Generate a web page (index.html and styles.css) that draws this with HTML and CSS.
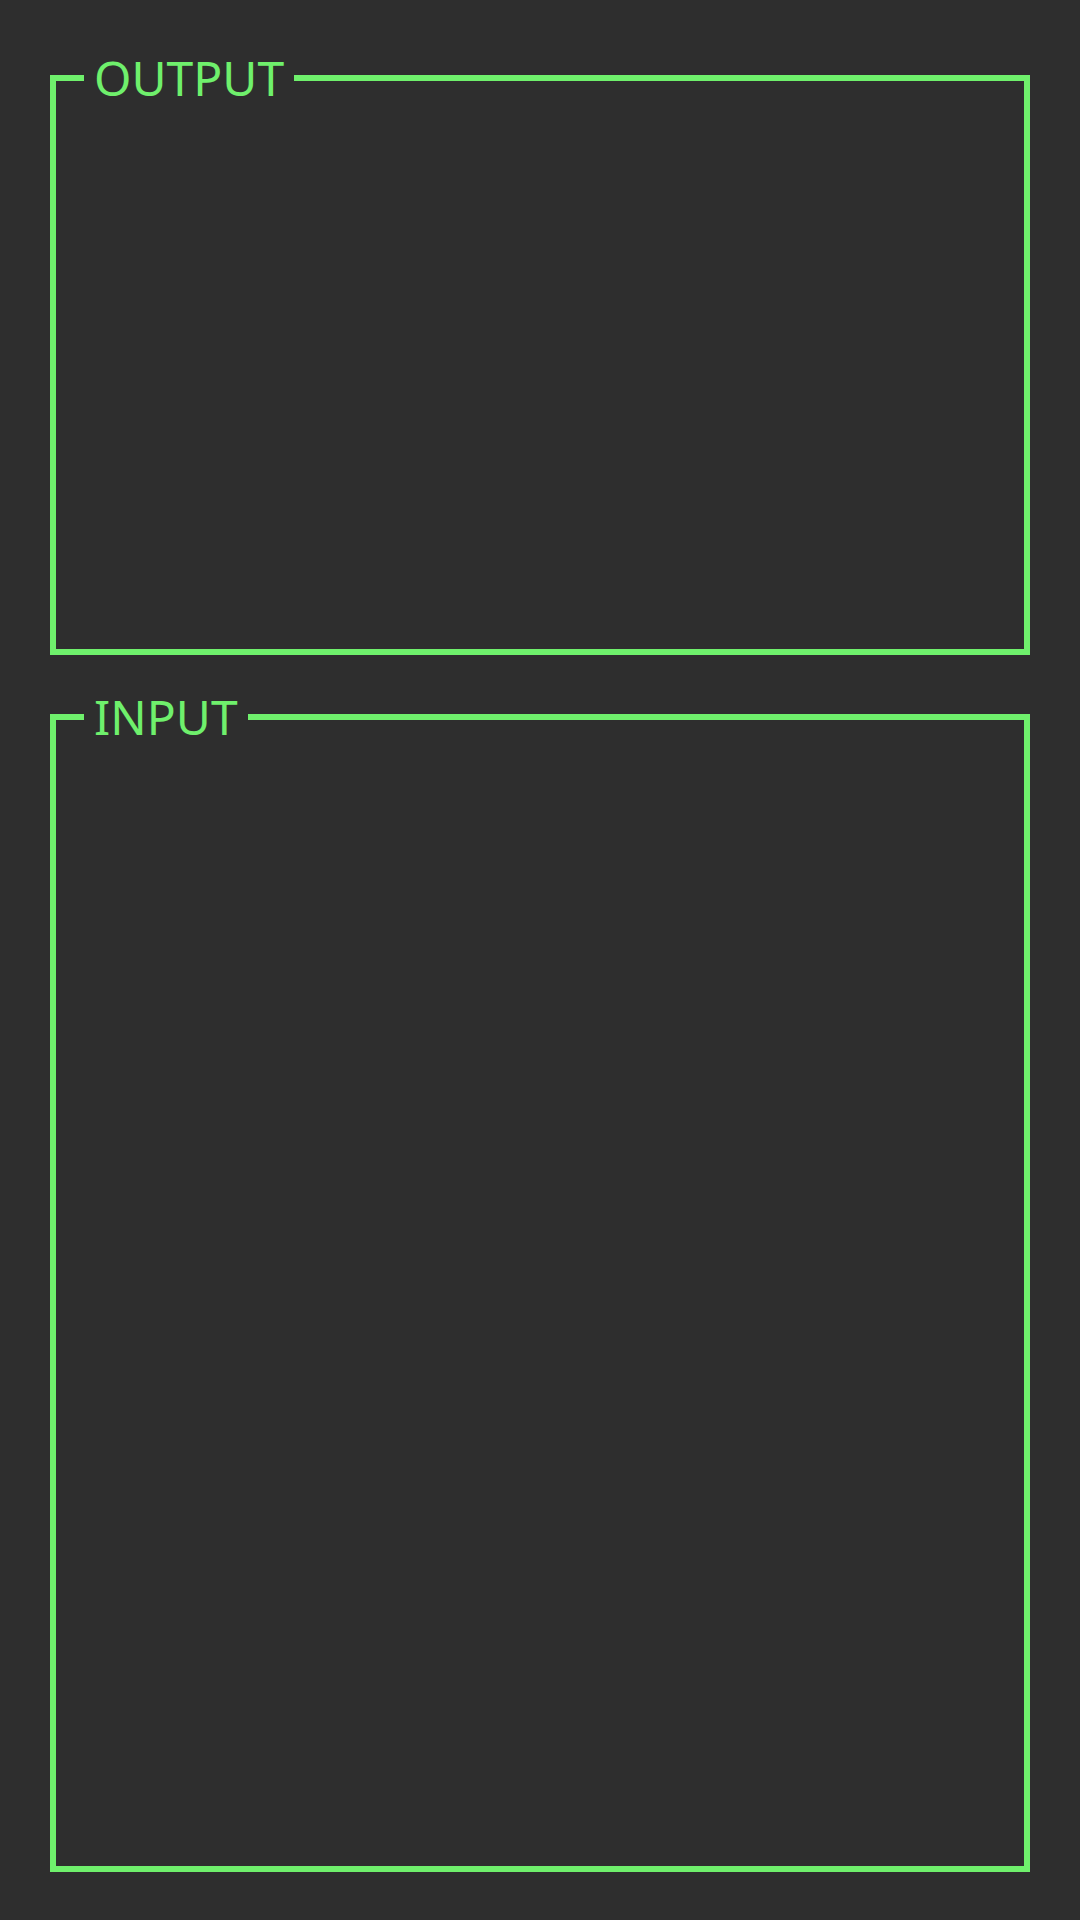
FILE: index.html
```html
<!DOCTYPE html>
<html>
<head>
<meta charset="utf-8">
<link rel="stylesheet" href="styles.css">
</head>
<body>
<main class="screen">
  <fieldset class="panel panel-output">
    <legend class="panel-label">OUTPUT</legend>
  </fieldset>
  <fieldset class="panel panel-input">
    <legend class="panel-label">INPUT</legend>
  </fieldset>
</main>
</body>
</html>
```
FILE: styles.css
```css
html, body {
  margin: 0;
  padding: 0;
  background: #2e2e2e;
}
.screen {
  box-sizing: border-box;
  width: 1080px;
  height: 1920px;
  padding: 48px 50px 48px;
  display: flex;
  flex-direction: column;
  gap: 32px;
  font-family: "Noto Sans", "Open Sans", sans-serif;
}
.panel {
  box-sizing: border-box;
  margin: 0;
  padding: 0 28px;
  border: 6px solid #6ff06c;
  min-width: 0;
}
.panel-output {
  height: 607px;
  flex: 0 0 auto;
}
.panel-input {
  flex: 1 1 auto;
}
.panel-label {
  padding: 2px 10px;
  font-size: 48px;
  line-height: 56px;
  color: #6ff06c;
}
```
